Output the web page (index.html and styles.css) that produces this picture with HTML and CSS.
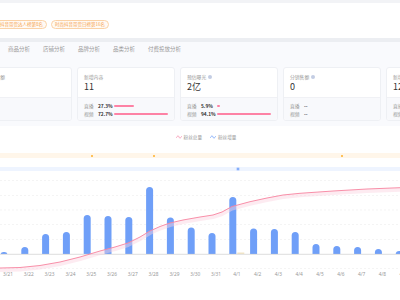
FILE: index.html
```html
<!DOCTYPE html>
<html lang="zh-CN">
<head>
  <meta charset="UTF-8">
  <title>达人数据概览</title>
  <link rel="stylesheet" href="styles.css">
</head>
<body>
  <div class="top-strip"></div>

  <div class="header">
    <div class="tags">
      <span class="tag">时尚抖音带货达人榜第8名</span>
      <span class="tag">时尚抖音带货日榜第16名</span>
    </div>
  </div>

  <div class="tabs">
    <span class="tab">商品分析</span>
    <span class="tab">店铺分析</span>
    <span class="tab">品牌分析</span>
    <span class="tab">品类分析</span>
    <span class="tab">付费投放分析</span>
  </div>

  <div class="overview">
    <div class="cards">
      <div class="card">
        <div class="card-top">
          <div class="card-label">预估销售额</div>
          <div class="card-value">0</div>
        </div>
        <div class="card-bottom">
          <div class="row"><span class="row-name">直播</span><span class="row-pct">--</span></div>
          <div class="row"><span class="row-name">视频</span><span class="row-pct">--</span></div>
        </div>
      </div>

      <div class="card">
        <div class="card-top">
          <div class="card-label">新增内容</div>
          <div class="card-value">11</div>
        </div>
        <div class="card-bottom">
          <div class="row"><span class="row-name">直播</span><span class="row-pct">27.3%</span><span class="row-bar"><i style="width: 37.5%"></i></span></div>
          <div class="row"><span class="row-name">视频</span><span class="row-pct">72.7%</span><span class="row-bar"><i style="width: 100%"></i></span></div>
        </div>
      </div>

      <div class="card">
        <div class="card-top">
          <div class="card-label">预估曝光<span class="info"></span></div>
          <div class="card-value">2亿</div>
        </div>
        <div class="card-bottom">
          <div class="row"><span class="row-name">直播</span><span class="row-pct">5.9%</span><span class="row-bar"><i style="width: 6.3%"></i></span></div>
          <div class="row"><span class="row-name">视频</span><span class="row-pct">94.1%</span><span class="row-bar"><i style="width: 100%"></i></span></div>
        </div>
      </div>

      <div class="card">
        <div class="card-top">
          <div class="card-label">分销售额<span class="info"></span></div>
          <div class="card-value">0</div>
        </div>
        <div class="card-bottom">
          <div class="row"><span class="row-name">直播</span><span class="row-pct">--</span></div>
          <div class="row"><span class="row-name">视频</span><span class="row-pct">--</span></div>
        </div>
      </div>

      <div class="card">
        <div class="card-top">
          <div class="card-label">新增粉丝</div>
          <div class="card-value">1283</div>
        </div>
        <div class="card-bottom">
          <div class="row"><span class="row-name">直播</span><span class="row-pct">--</span></div>
          <div class="row"><span class="row-name">视频</span><span class="row-pct">--</span></div>
        </div>
      </div>
    </div>
  </div>

  <div class="chart-panel">
    <div class="legend">
      <span class="legend-item">
        <svg width="6" height="4" viewBox="0 0 6 4"><path d="M0 3 C1.5 0.5 2.5 0.5 3 2 S4.5 3.5 6 1" fill="none" stroke="#f58bab" stroke-width="0.8"/></svg>
        粉丝总量
      </span>
      <span class="legend-item">
        <svg width="6" height="4" viewBox="0 0 6 4"><path d="M0 3 C1.5 0.5 2.5 0.5 3 2 S4.5 3.5 6 1" fill="none" stroke="#6f9ff8" stroke-width="0.8"/></svg>
        粉丝增量
      </span>
    </div>

    <div class="band band-orange">
      <span class="dot dot-orange" style="left: 90.5px"></span>
      <span class="dot dot-orange" style="left: 153px"></span>
      <span class="dot dot-orange" style="left: 340.5px"></span>
    </div>
    <div class="band band-blue">
      <span class="dot dot-blue" style="left: 236.5px"></span>
    </div>

    <svg class="chart" width="400" height="110" viewBox="0 176 400 110">
      <defs>
        <clipPath id="above-axis"><rect x="0" y="170" width="400" height="84"/></clipPath>
      </defs>
      <g stroke="#ececec" stroke-width="0.6" stroke-dasharray="2 2">
        <line x1="0" y1="180.5" x2="400" y2="180.5"/>
        <line x1="0" y1="195.5" x2="400" y2="195.5"/>
        <line x1="0" y1="210" x2="400" y2="210"/>
        <line x1="0" y1="224.5" x2="400" y2="224.5"/>
        <line x1="0" y1="239.5" x2="400" y2="239.5"/>
        <line x1="0" y1="268.5" x2="400" y2="268.5"/>
      </g>
      <g fill="#6f9ff8" clip-path="url(#above-axis)">
        <rect x="0.5" y="252" width="7" height="8" rx="3"/>
        <rect x="21.3" y="247" width="7" height="14" rx="3.5"/>
        <rect x="42.1" y="234" width="7" height="27" rx="3.5"/>
        <rect x="62.9" y="232" width="7" height="29" rx="3.5"/>
        <rect x="83.7" y="215" width="7" height="46" rx="3.5"/>
        <rect x="104.5" y="216" width="7" height="45" rx="3.5"/>
        <rect x="125.3" y="217" width="7" height="44" rx="3.5"/>
        <rect x="146.1" y="187" width="7" height="74" rx="3.5"/>
        <rect x="166.9" y="217.5" width="7" height="44" rx="3.5"/>
        <rect x="187.7" y="227.5" width="7" height="34" rx="3.5"/>
        <rect x="208.5" y="233" width="7" height="28" rx="3.5"/>
        <rect x="229.3" y="197" width="7" height="64" rx="3.5"/>
        <rect x="250.1" y="228.5" width="7" height="33" rx="3.5"/>
        <rect x="270.9" y="229" width="7" height="32" rx="3.5"/>
        <rect x="291.7" y="232" width="7" height="29" rx="3.5"/>
        <rect x="312.5" y="244" width="7" height="17" rx="3.5"/>
        <rect x="333.3" y="246" width="7" height="15" rx="3.5"/>
        <rect x="354.1" y="247" width="7" height="14" rx="3.5"/>
        <rect x="374.9" y="249" width="7" height="12" rx="3.5"/>
        <rect x="395.7" y="251" width="7" height="10" rx="3.5"/>
      </g>
      <rect x="237.3" y="252.5" width="7" height="1.5" fill="#f3e6c6"/>
      <line x1="0" y1="254.3" x2="400" y2="254.3" stroke="#cfcfcf" stroke-width="0.7"/>
      <polyline transform="translate(0 2)" fill="none" stroke="#fbd3df" stroke-width="4" stroke-opacity="0.45" stroke-linejoin="round"
        points="0,268 20,267.5 40,265.5 60,262 80,257 100,251 115,247 128,243 140,237 150,231 160,226.5 170,223 183,220 200,217 213,215 222,212 232,206.5 250,201.7 267,198 283,195 300,193.3 333,191 367,189 400,187.7"/>
      <polyline fill="none" stroke="#f7839f" stroke-width="0.9" stroke-linejoin="round"
        points="0,268 20,267.5 40,265.5 60,262 80,257 100,251 115,247 128,243 140,237 150,231 160,226.5 170,223 183,220 200,217 213,215 222,212 232,206.5 250,201.7 267,198 283,195 300,193.3 333,191 367,189 400,187.7"/>
      <g class="axis-labels" text-anchor="middle">
        <text x="8" y="276">3/21</text>
        <text x="28.8" y="276">3/22</text>
        <text x="49.6" y="276">3/23</text>
        <text x="70.4" y="276">3/24</text>
        <text x="91.2" y="276">3/25</text>
        <text x="112" y="276">3/26</text>
        <text x="132.8" y="276">3/27</text>
        <text x="153.6" y="276">3/28</text>
        <text x="174.4" y="276">3/29</text>
        <text x="195.2" y="276">3/30</text>
        <text x="216" y="276">3/31</text>
        <text x="236.8" y="276">4/1</text>
        <text x="257.6" y="276">4/2</text>
        <text x="278.4" y="276">4/3</text>
        <text x="299.2" y="276">4/4</text>
        <text x="320" y="276">4/5</text>
        <text x="340.8" y="276">4/6</text>
        <text x="361.6" y="276">4/7</text>
        <text x="382.4" y="276">4/8</text>
        <text x="403.2" y="276">4/9</text>
      </g>
    </svg>
  </div>
</body>
</html>
```

FILE: styles.css
```css
body {
  margin: 0;
  width: 400px;
  height: 300px;
  overflow: hidden;
  background: #fff;
  font-family: "Noto Sans CJK SC", "Noto Sans", sans-serif;
  color: #333;
}

.top-strip {
  height: 3px;
  background: #f2f3f6;
}

.header {
  height: 35px;
  background: #fff;
  box-sizing: border-box;
  padding-top: 17px;
}

.tags {
  display: flex;
  gap: 4px;
  margin-left: -13px;
}

.tag {
  display: inline-flex;
  align-items: center;
  height: 9px;
  box-sizing: border-box;
  padding: 0 3px;
  border: 0.8px solid #fbd2a6;
  border-radius: 5px;
  background: #fffaf4;
  color: #f5a24e;
  font-size: 4.5px;
  line-height: 1;
  white-space: nowrap;
}

.tabs {
  display: flex;
  align-items: center;
  gap: 13px;
  height: 16px;
  padding-left: 8px;
  border-top: 4px solid #eceef2;
  background: #f9fafd;
}

.tab {
  font-size: 5.5px;
  color: #999;
  line-height: 1;
  white-space: nowrap;
}

.overview {
  background: #f9fafd;
  padding: 9px 0 5px;
}

.cards {
  display: flex;
  gap: 5px;
  margin-left: -26px;
}

.card {
  flex: 0 0 98px;
  height: 54px;
  box-sizing: border-box;
  border: 0.8px solid #eef0f4;
  border-radius: 3px;
  overflow: hidden;
  background: #fff;
  display: flex;
  flex-direction: column;
}

.card-top {
  height: 29px;
  box-sizing: border-box;
  padding: 6px 6px 0;
}

.card-label {
  display: flex;
  align-items: center;
  gap: 2px;
  font-size: 4.8px;
  line-height: 6px;
  color: #999;
  white-space: nowrap;
}

.info {
  width: 4px;
  height: 4px;
  border-radius: 50%;
  background: #c3cde3;
}

.card-value {
  margin-top: 1px;
  font-size: 9px;
  line-height: 11px;
  color: #333;
  white-space: nowrap;
}

.card-bottom {
  flex: 1;
  background: #f8f9fc;
  border-top: 0.8px solid #f0f1f5;
  padding: 5px 6px 0;
  display: flex;
  flex-direction: column;
  gap: 2px;
}

.row {
  display: flex;
  align-items: center;
  height: 6px;
  font-size: 4.8px;
  line-height: 1;
  white-space: nowrap;
}

.row-name {
  width: 14px;
  color: #999;
}

.row-pct {
  width: 16px;
  color: #333;
  font-weight: bold;
}

.row-bar {
  flex: 1;
  height: 2px;
}

.row-bar i {
  display: block;
  height: 2px;
  min-width: 2px;
  border-radius: 1px;
  background: #fd82a5;
}

.chart-panel {
  padding-top: 7px;
  background: #fff;
}

.legend {
  display: flex;
  justify-content: center;
  gap: 8px;
  margin-left: 12px;
  height: 8px;
  align-items: center;
}

.legend-item {
  display: inline-flex;
  align-items: center;
  gap: 2px;
  font-size: 4.6px;
  color: #999;
  white-space: nowrap;
}

.band {
  position: relative;
}

.band-orange {
  height: 5px;
  margin-top: 12px;
  background: #fff6ea;
}

.band-blue {
  height: 4px;
  margin-top: 9px;
  background: #eef4ff;
}

.dot {
  position: absolute;
  top: 50%;
  width: 2px;
  height: 2px;
  margin-top: -1px;
  border-radius: 50%;
}

.dot-orange {
  background: #ffb12a;
}

.dot-blue {
  background: #6f9ff8;
  box-shadow: 0 0 0 1px #c6d9ff;
}

.chart {
  display: block;
  margin-top: 5px;
}

.axis-labels text {
  font-family: "Noto Sans", sans-serif;
  font-size: 4.8px;
  fill: #999;
}
```
